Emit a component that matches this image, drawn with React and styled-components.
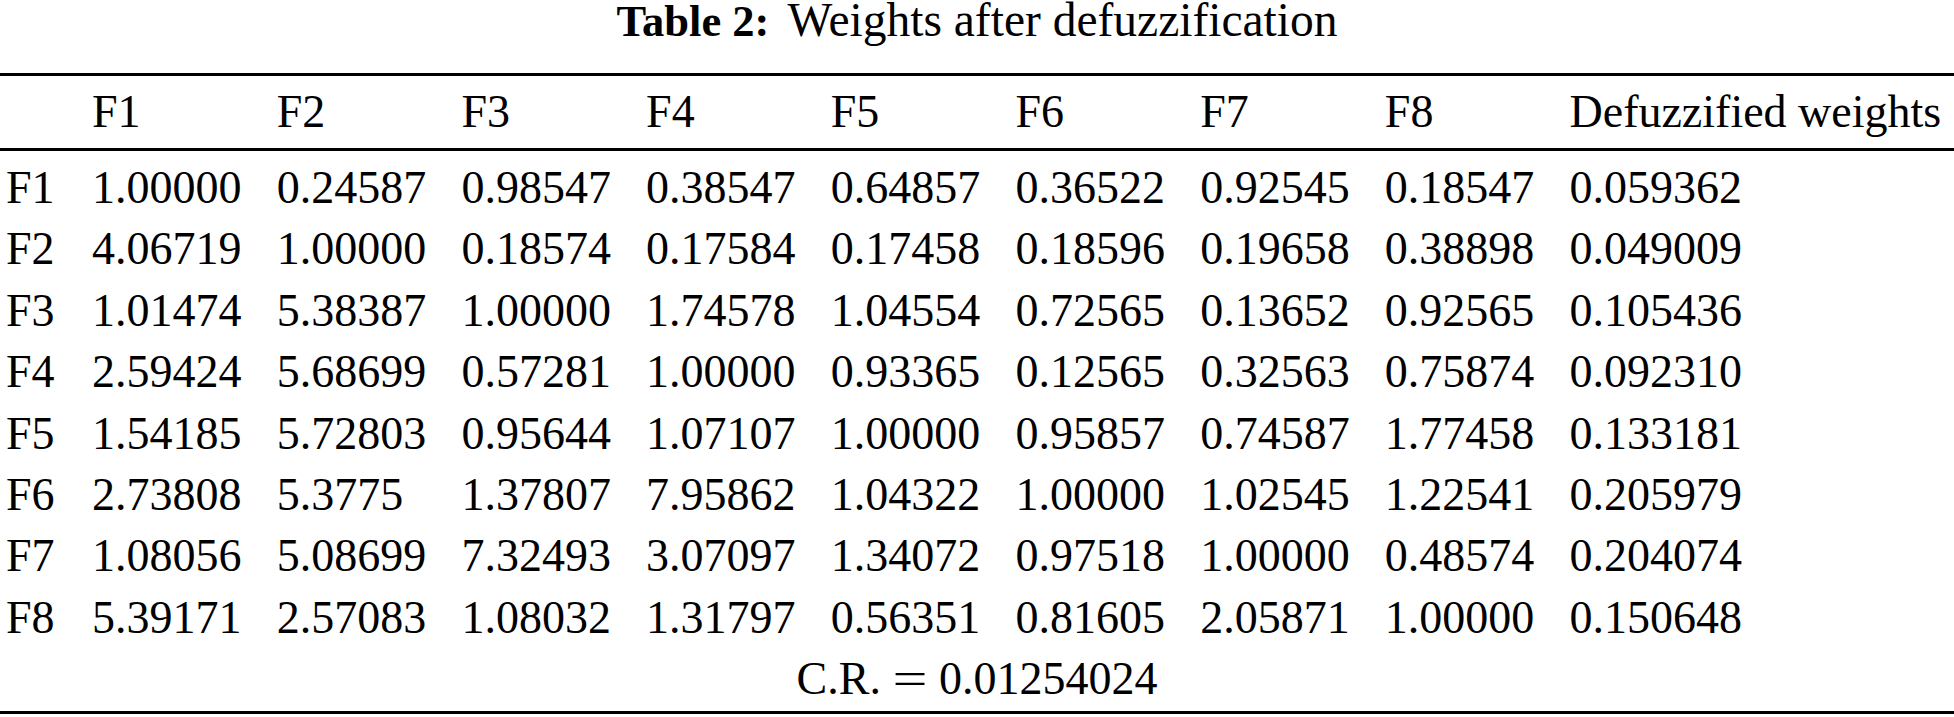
import React from "react";
import styled, { createGlobalStyle } from "styled-components";

const Global = createGlobalStyle`
  html, body { margin: 0; padding: 0; background: #fff; }
  body { font-family: "Liberation Serif", "Times New Roman", serif; color: #000; }
`;

const Page = styled.div`
  width: 1954px;
  height: 717px;
  background: #fff;
  font-size: 46px;
  overflow: hidden;
`;

const Caption = styled.div`
  height: 73px;
  font-size: 47.5px;
  line-height: 40px;
  text-align: center;
  white-space: nowrap;
`;

const CaptionLabel = styled.span`
  font-size: 44.5px;
  font-weight: bold;
  margin-right: 7px;
`;

const Table = styled.div`
  border-top: 3px solid #000;
  border-bottom: 3px solid #000;
`;

const Head = styled.div`
  padding: 5px 0 5.6px;
  border-bottom: 3px solid #000;
`;

const Body = styled.div`
  padding: 6px 0 1.4px;
`;

const Row = styled.div`
  display: grid;
  grid-template-columns: 92px repeat(8, 184.7px) 1fr;
  height: 61.4px;
  line-height: 61.4px;
  white-space: nowrap;
`;

const Cell = styled.div`
  padding-left: ${(p) => (p.$label ? "6px" : "0")};
`;

const Summary = styled.div`
  height: 61.4px;
  line-height: 61.4px;
  text-align: center;
  white-space: nowrap;
`;

const Eq = styled.span`
  display: inline-block;
  margin: 0 16px;
  transform: scaleX(1.35);
`;

const headers = ["F1", "F2", "F3", "F4", "F5", "F6", "F7", "F8", "Defuzzified weights"];

const rows = [
  ["F1", "1.00000", "0.24587", "0.98547", "0.38547", "0.64857", "0.36522", "0.92545", "0.18547", "0.059362"],
  ["F2", "4.06719", "1.00000", "0.18574", "0.17584", "0.17458", "0.18596", "0.19658", "0.38898", "0.049009"],
  ["F3", "1.01474", "5.38387", "1.00000", "1.74578", "1.04554", "0.72565", "0.13652", "0.92565", "0.105436"],
  ["F4", "2.59424", "5.68699", "0.57281", "1.00000", "0.93365", "0.12565", "0.32563", "0.75874", "0.092310"],
  ["F5", "1.54185", "5.72803", "0.95644", "1.07107", "1.00000", "0.95857", "0.74587", "1.77458", "0.133181"],
  ["F6", "2.73808", "5.3775", "1.37807", "7.95862", "1.04322", "1.00000", "1.02545", "1.22541", "0.205979"],
  ["F7", "1.08056", "5.08699", "7.32493", "3.07097", "1.34072", "0.97518", "1.00000", "0.48574", "0.204074"],
  ["F8", "5.39171", "2.57083", "1.08032", "1.31797", "0.56351", "0.81605", "2.05871", "1.00000", "0.150648"],
];

export default function App() {
  return (
    <Page>
      <Global />
      <Caption>
        <CaptionLabel>Table 2:</CaptionLabel> Weights after defuzzification
      </Caption>
      <Table>
        <Head>
          <Row>
            <Cell $label />
            {headers.map((h) => (
              <Cell key={h}>{h}</Cell>
            ))}
          </Row>
        </Head>
        <Body>
          {rows.map((r) => (
            <Row key={r[0]}>
              {r.map((v, i) => (
                <Cell key={i} $label={i === 0}>
                  {v}
                </Cell>
              ))}
            </Row>
          ))}
          <Summary>
            C.R.<Eq>=</Eq>0.01254024
          </Summary>
        </Body>
      </Table>
    </Page>
  );
}
